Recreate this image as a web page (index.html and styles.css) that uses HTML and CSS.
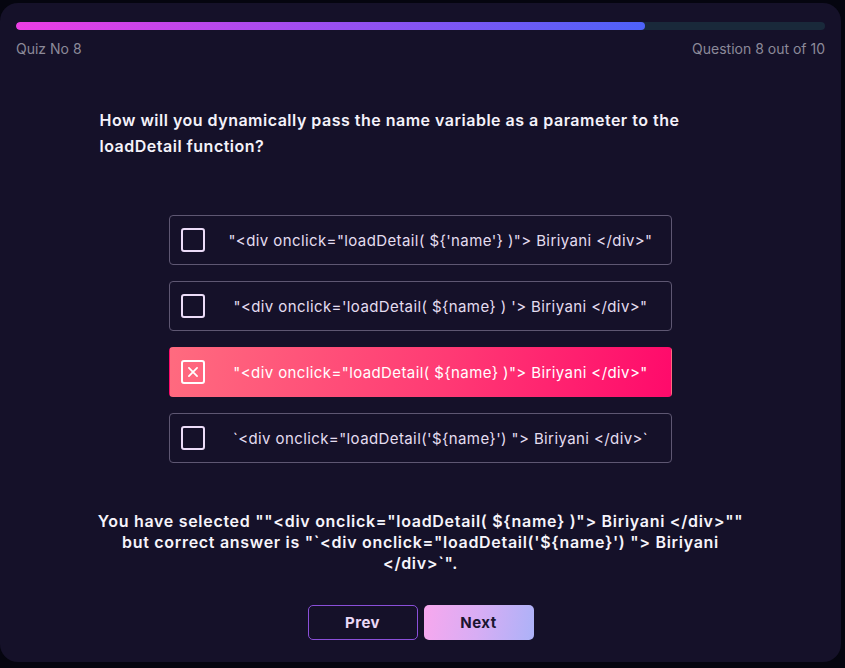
FILE: index.html
```html
<!DOCTYPE html>
<html lang="en">
<head>
<meta charset="utf-8">
<title>Quiz</title>
<link rel="stylesheet" href="styles.css">
</head>
<body>
<main class="card">
  <div class="progress"><div class="progress-fill" style="width: 77.8%"></div></div>
  <div class="meta">
    <span>Quiz No 8</span>
    <span>Question 8 out of 10</span>
  </div>
  <section class="body">
    <h1 class="question">How will you dynamically pass the name variable as a parameter to the loadDetail function?</h1>
    <ul class="options">
      <li class="option"><span class="check"></span><span class="opt-text">"&lt;div onclick="loadDetail( ${'name'} )"&gt; Biriyani &lt;/div&gt;"</span></li>
      <li class="option"><span class="check"></span><span class="opt-text">"&lt;div onclick='loadDetail( ${name} ) '&gt; Biriyani &lt;/div&gt;"</span></li>
      <li class="option selected"><span class="check"><svg viewBox="0 0 24 24" width="14" height="14"><path d="M5 5 L19 19 M19 5 L5 19" stroke="#fff" stroke-width="3" stroke-linecap="round"/></svg></span><span class="opt-text">"&lt;div onclick="loadDetail( ${name} )"&gt; Biriyani &lt;/div&gt;"</span></li>
      <li class="option"><span class="check"></span><span class="opt-text">`&lt;div onclick="loadDetail('${name}') "&gt; Biriyani &lt;/div&gt;`</span></li>
    </ul>
    <p class="feedback">You have selected ""&lt;div onclick="loadDetail( ${name} )"&gt; Biriyani &lt;/div&gt;"" but correct answer is "`&lt;div onclick="loadDetail('${name}') "&gt; Biriyani &lt;/div&gt;`".</p>
    <div class="actions">
      <button class="btn btn-prev">Prev</button>
      <button class="btn btn-next">Next</button>
    </div>
  </section>
</main>
</body>
</html>
```

FILE: styles.css
```css
* { box-sizing: border-box; }
html, body { margin: 0; padding: 0; }
body {
  background: #05050f;
  width: 845px;
  height: 668px;
  padding-top: 3px;
  font-family: Inter, "Open Sans", sans-serif;
}
.card {
  width: 841px;
  height: 659px;
  background: #151129;
  border-radius: 18px;
  padding: 19px 16px 0 16px;
}
.progress {
  height: 8px;
  border-radius: 4px;
  background: #19293a;
  overflow: hidden;
}
.progress-fill {
  height: 100%;
  border-radius: 4px;
  background: linear-gradient(90deg, #ec3de4 0%, #a24df0 45%, #4d62f8 100%);
}
.meta {
  display: flex;
  justify-content: space-between;
  margin-top: 10px;
  font-size: 14px;
  line-height: 18px;
  color: #8c8a99;
  letter-spacing: 0;
}
.body {
  width: 642px;
  margin: 0 auto;
  padding-top: 49px;
  display: flex;
  flex-direction: column;
  align-items: center;
}
.question {
  align-self: stretch;
  margin: 0;
  font-size: 16px;
  line-height: 26px;
  font-weight: 600;
  color: #f4f2fa;
  letter-spacing: 0.5px;
}
.options {
  list-style: none;
  margin: 56px 0 0 0;
  padding: 0;
  width: 503px;
  display: flex;
  flex-direction: column;
  gap: 16px;
}
.option {
  height: 50px;
  display: flex;
  align-items: center;
  padding: 0 5px 0 11px;
  border: 1px solid #5e5772;
  border-radius: 4px;
  color: #e4ddf0;
}
.option.selected {
  border-color: transparent;
  background: linear-gradient(100deg, #ff6b7f 0%, #ff3a74 55%, #ff0a6b 100%);
  color: #fff;
}
.check {
  width: 24px;
  height: 24px;
  flex: none;
  border: 2px solid #ecdcf8;
  border-radius: 3px;
  display: flex;
  align-items: center;
  justify-content: center;
}
.option.selected .check { border-color: #fff; }
.opt-text {
  flex: 1;
  text-align: center;
  margin-left: 10px;
  font-size: 15px;
  letter-spacing: 0.4px;
  white-space: nowrap;
}
.feedback {
  width: 652px;
  margin: 48px 0 0 0;
  text-align: center;
  font-size: 16px;
  line-height: 21px;
  font-weight: 600;
  color: #f6f4fb;
  letter-spacing: 0.7px;
}
.actions {
  display: flex;
  gap: 6px;
  margin-top: 31px;
}
.btn {
  width: 110px;
  height: 35px;
  border-radius: 5px;
  font-family: inherit;
  font-size: 15px;
  font-weight: 700;
  letter-spacing: 0.5px;
  cursor: pointer;
}
.btn-prev {
  background: transparent;
  border: 1px solid #8a4fd9;
  color: #ead9f7;
}
.btn-next {
  border: none;
  background: linear-gradient(100deg, #f8a8ee 0%, #d7adf4 50%, #acb2f8 100%);
  color: #1b1530;
}
```
